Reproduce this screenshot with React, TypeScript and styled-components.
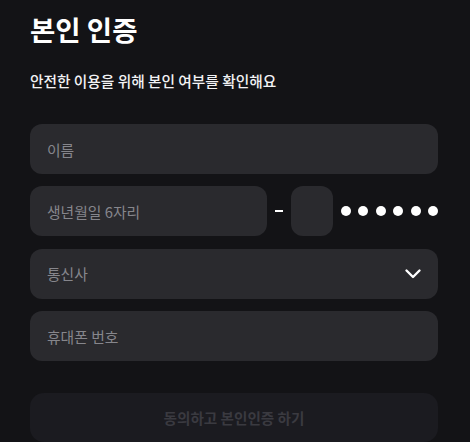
import React from "react";
import styled, { createGlobalStyle } from "styled-components";

const Global = createGlobalStyle`
  html, body { margin: 0; padding: 0; background: #131316; }
  body { font-family: "Noto Sans CJK KR", "Noto Sans", sans-serif; }
  * { box-sizing: border-box; }
`;

const Page = styled.div`
  width: 470px;
  height: 442px;
  overflow: hidden;
  background: #131316;
  padding: 12px 32px 0 30px;
  display: flex;
  flex-direction: column;
`;

const Title = styled.h1`
  margin: 0;
  font-size: 27.5px;
  line-height: 35px;
  font-weight: 700;
  color: #ffffff;
`;

const Subtitle = styled.p`
  margin: 24px 0 0;
  font-size: 14.7px;
  line-height: 20px;
  font-weight: 500;
  color: #f2f2f4;
`;

const Form = styled.div`
  margin-top: 33px;
  display: flex;
  flex-direction: column;
  gap: 12.4px;
`;

const Field = styled.div<{ $width?: string }>`
  height: 50px;
  flex: ${(p) => (p.$width ? `0 0 ${p.$width}` : "1 1 auto")};
  background: #2a2a2e;
  border-radius: 12px;
  display: flex;
  align-items: center;
  justify-content: space-between;
  padding: 0 17px 0 17px;
  font-size: 14.8px;
  color: #86868c;
`;

const Row = styled.div`
  display: flex;
  align-items: center;
  gap: 8px;
`;

const Dash = styled.span`
  width: 8px;
  height: 2px;
  background: #ffffff;
  flex: 0 0 8px;
`;

const Dots = styled.div`
  display: flex;
  gap: 7.4px;
  flex: 0 0 auto;
`;

const Dot = styled.span`
  width: 10px;
  height: 10px;
  border-radius: 50%;
  background: #ffffff;
`;

const Chevron = styled.svg`
  width: 18px;
  height: 18px;
  margin-right: -1px;
`;

const Submit = styled.button`
  margin-top: 32px;
  height: 50px;
  width: 100%;
  border: none;
  border-radius: 14px;
  background: #1b1b20;
  color: #3a3a40;
  font-family: inherit;
  font-size: 14.6px;
  font-weight: 700;
  padding: 0;
`;

export default function App() {
  return (
    <>
      <Global />
      <Page>
        <Title>본인 인증</Title>
        <Subtitle>안전한 이용을 위해 본인 여부를 확인해요</Subtitle>
        <Form>
          <Field>이름</Field>
          <Row>
            <Field>생년월일 6자리</Field>
            <Dash />
            <Field $width="42px" />
            <Dots>
              {Array.from({ length: 6 }).map((_, i) => (
                <Dot key={i} />
              ))}
            </Dots>
          </Row>
          <Field>
            <span>통신사</span>
            <Chevron viewBox="0 0 18 18" fill="none">
              <path
                d="M2.5 5.5 L9 12 L15.5 5.5"
                stroke="#ffffff"
                strokeWidth="2.4"
                strokeLinecap="round"
                strokeLinejoin="round"
              />
            </Chevron>
          </Field>
          <Field>휴대폰 번호</Field>
        </Form>
        <Submit>동의하고 본인인증 하기</Submit>
      </Page>
    </>
  );
}
